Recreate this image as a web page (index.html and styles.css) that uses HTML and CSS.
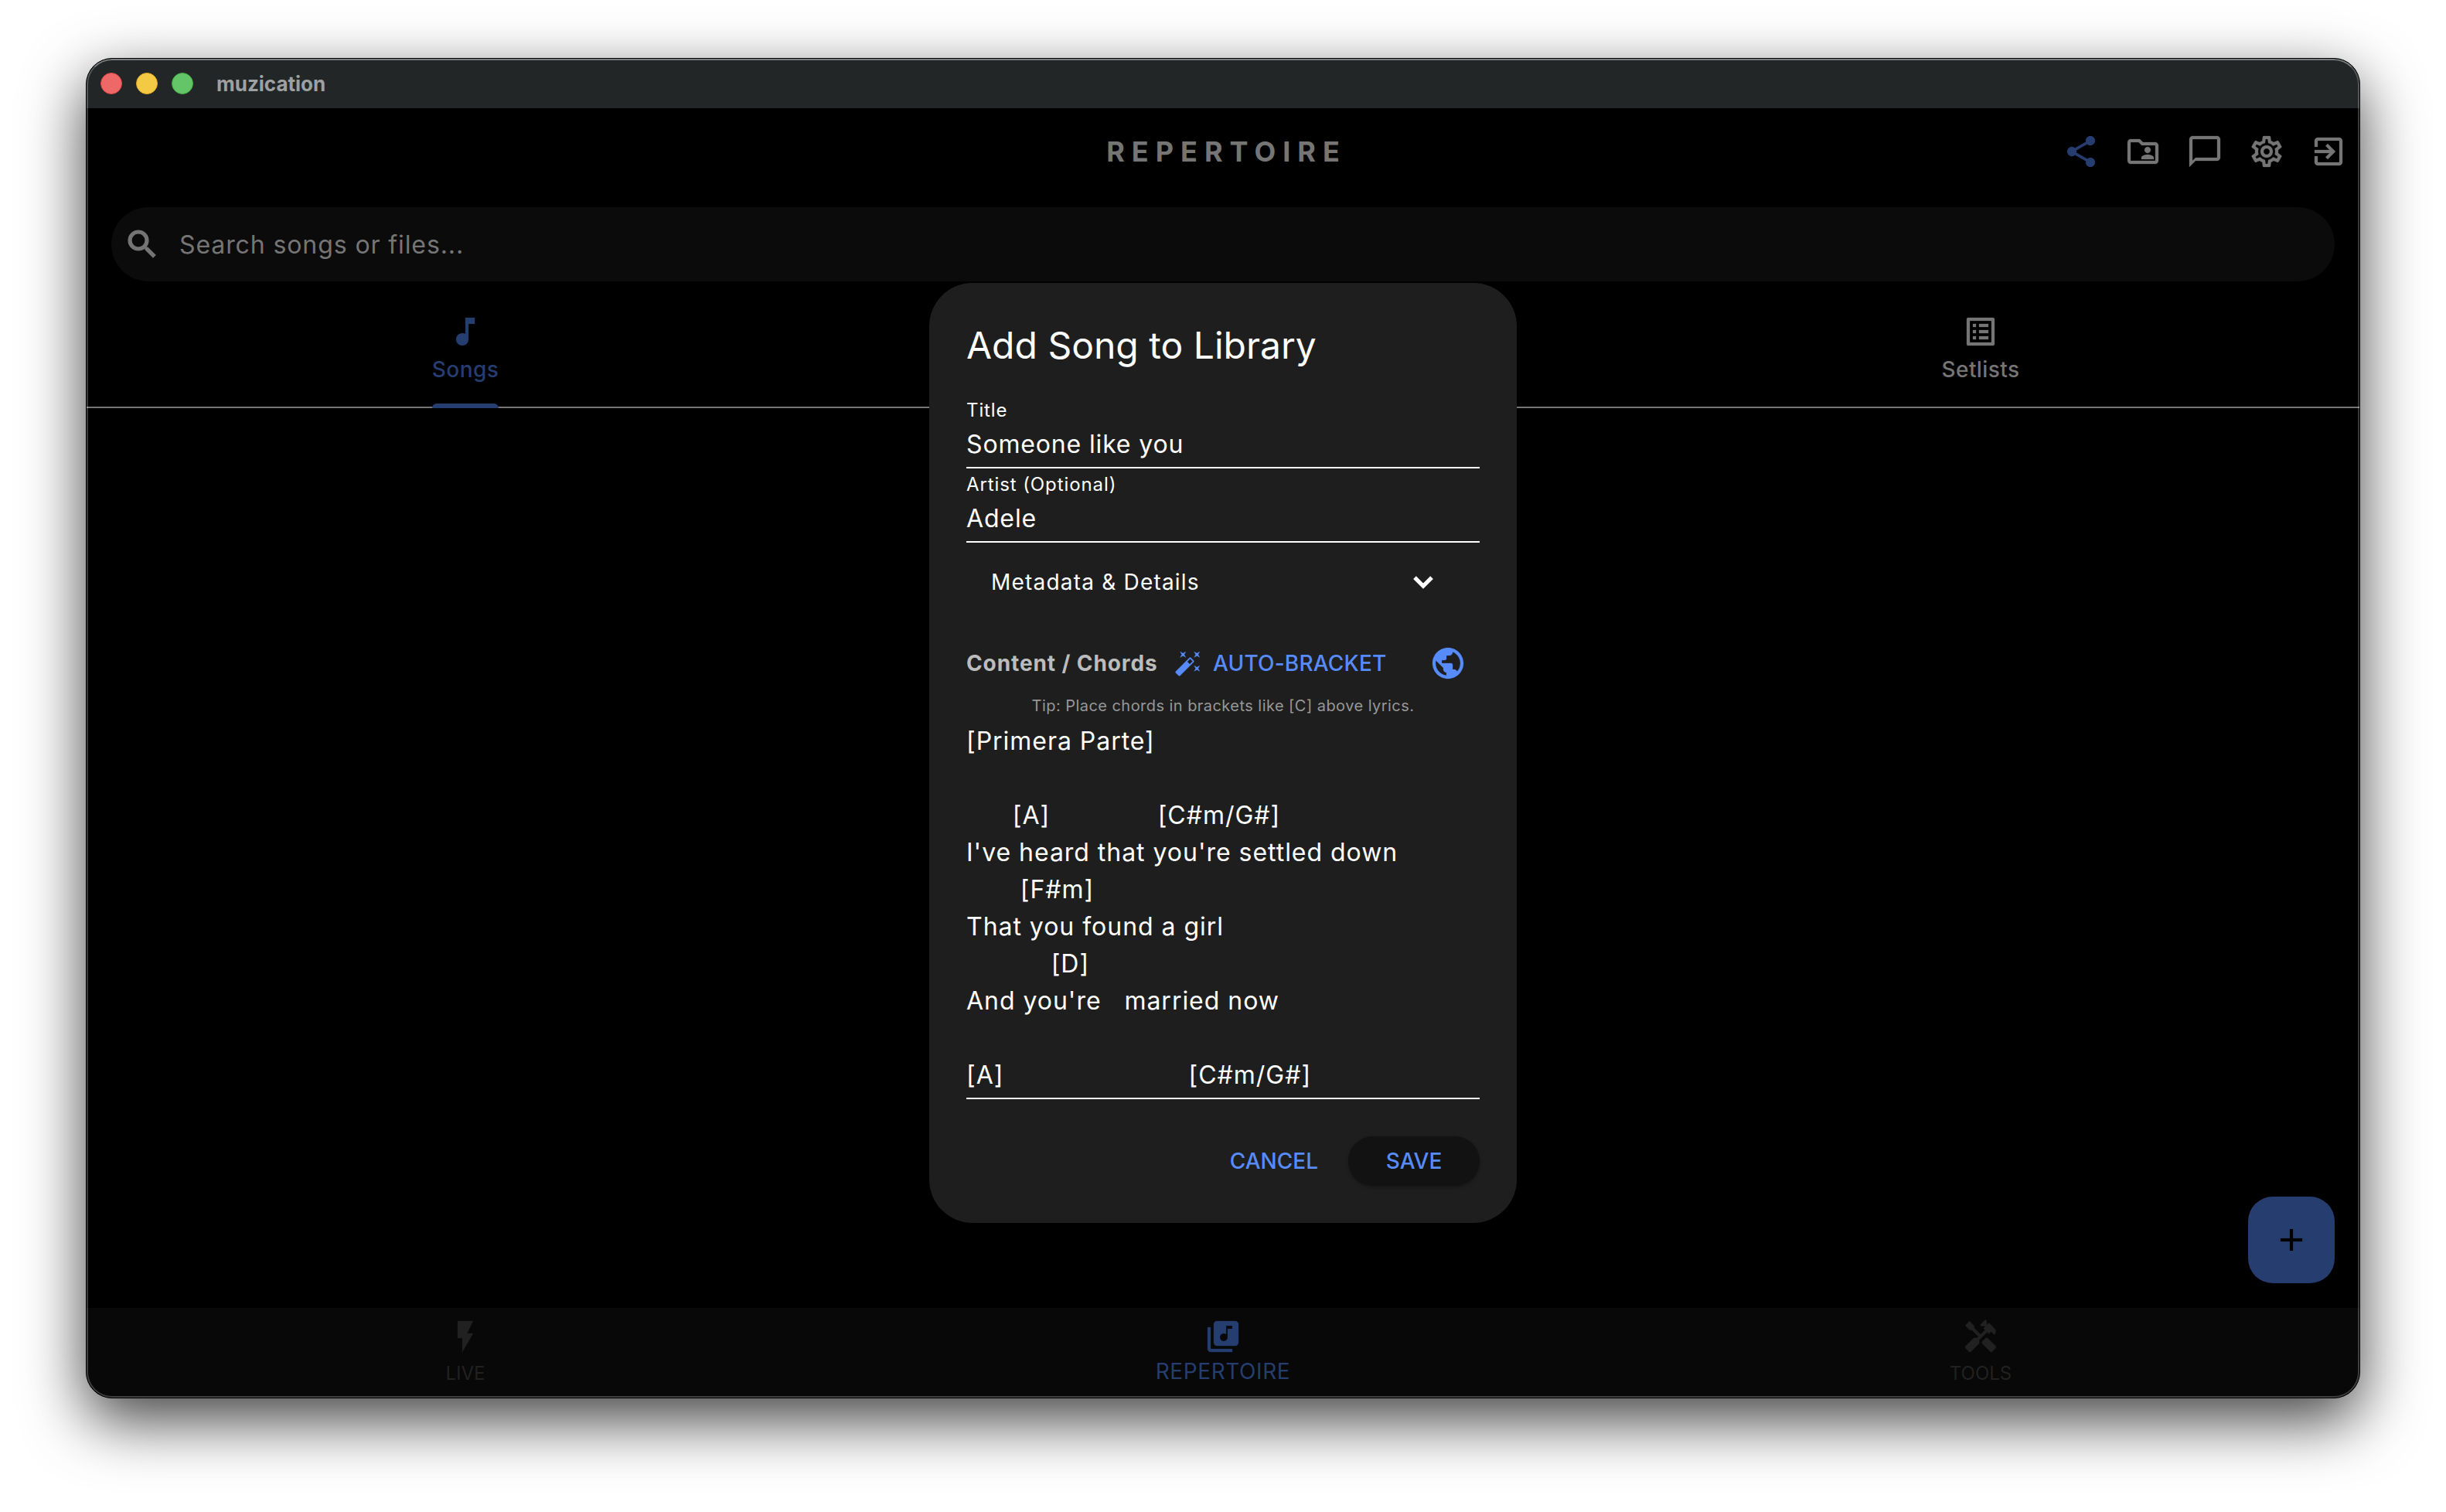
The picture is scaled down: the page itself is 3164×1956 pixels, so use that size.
FILE: index.html
```html
<!DOCTYPE html>
<html lang="en">
<head>
    <meta charset="UTF-8">
    <title>muzication</title>
    <link rel="stylesheet" href="styles.css">
</head>
<body>
    <div class="window">
        <div class="titlebar">
            <span class="dot red"></span>
            <span class="dot yellow"></span>
            <span class="dot green"></span>
            <span class="app-name">muzication</span>
        </div>

        <header class="appbar">
            <h1>REPERTOIRE</h1>
            <div class="actions">
                <svg class="icon active" viewBox="0 0 24 24"><path d="M18 16c-.76 0-1.44.3-1.96.77L8.91 12.7c.05-.23.09-.46.09-.7s-.04-.47-.09-.7l7.05-4.11c.54.5 1.25.81 2.04.81 1.66 0 3-1.34 3-3s-1.34-3-3-3-3 1.34-3 3c0 .24.04.47.09.7L8.04 9.81C7.5 9.31 6.79 9 6 9c-1.66 0-3 1.34-3 3s1.34 3 3 3c.79 0 1.5-.31 2.04-.81l7.05 4.12c-.05.22-.09.45-.09.69 0 1.66 1.34 3 3 3s3-1.34 3-3-1.34-3-3-3z"/></svg>
                <svg class="icon" viewBox="0 0 24 24"><path d="M20 6h-8l-2-2H4c-1.1 0-1.99.9-1.99 2L2 18c0 1.1.9 2 2 2h16c1.1 0 2-.9 2-2V8c0-1.1-.9-2-2-2zm0 12H4V6h5.17l2 2H20v10zm-5-5c1.1 0 2-.9 2-2s-.9-2-2-2-2 .9-2 2 .9 2 2 2zm-4 4h8v-1c0-1.33-2.67-2-4-2s-4 .67-4 2v1z"/></svg>
                <svg class="icon" viewBox="0 0 24 24"><path d="M20 2H4c-1.1 0-2 .9-2 2v18l4-4h14c1.1 0 2-.9 2-2V4c0-1.1-.9-2-2-2zm0 14H6l-2 2V4h16v12z"/></svg>
                <svg class="icon" viewBox="0 0 24 24"><path d="M19.43 12.98c.04-.32.07-.64.07-.98 0-.34-.03-.66-.07-.98l2.11-1.65c.19-.15.24-.42.12-.64l-2-3.46c-.09-.16-.26-.25-.44-.25-.06 0-.12.01-.17.03l-2.49 1c-.52-.4-1.08-.73-1.69-.98l-.38-2.65C14.46 2.18 14.25 2 14 2h-4c-.25 0-.46.18-.49.42l-.38 2.65c-.61.25-1.17.59-1.69.98l-2.49-1c-.06-.02-.12-.03-.18-.03-.17 0-.34.09-.43.25l-2 3.46c-.13.22-.07.49.12.64l2.11 1.65c-.04.32-.07.65-.07.98 0 .33.03.66.07.98l-2.11 1.65c-.19.15-.24.42-.12.64l2 3.46c.09.16.26.25.44.25.06 0 .12-.01.17-.03l2.49-1c.52.4 1.08.73 1.69.98l.38 2.65c.03.24.24.42.49.42h4c.25 0 .46-.18.49-.42l.38-2.65c.61-.25 1.17-.59 1.69-.98l2.49 1c.06.02.12.03.18.03.17 0 .34-.09.43-.25l2-3.46c.12-.22.07-.49-.12-.64l-2.11-1.65zm-1.98-1.71c.04.31.05.52.05.73 0 .21-.02.43-.05.73l-.14 1.13.89.7 1.08.84-.7 1.21-1.27-.51-1.04-.42-.9.68c-.43.32-.84.56-1.25.73l-1.06.43-.16 1.13-.2 1.35h-1.4l-.19-1.35-.16-1.13-1.06-.43c-.43-.18-.83-.41-1.23-.71l-.91-.7-1.06.43-1.27.51-.7-1.21 1.08-.84.89-.7-.14-1.13c-.03-.31-.05-.54-.05-.74s.02-.43.05-.73l.14-1.13-.89-.7-1.08-.84.7-1.21 1.27.51 1.04.42.9-.68c.43-.32.84-.56 1.25-.73l1.06-.43.16-1.13.2-1.35h1.39l.19 1.35.16 1.13 1.06.43c.43.18.83.41 1.23.71l.91.7 1.06-.43 1.27-.51.7 1.21-1.07.85-.89.7.14 1.13zM12 8c-2.21 0-4 1.79-4 4s1.79 4 4 4 4-1.79 4-4-1.79-4-4-4zm0 6c-1.1 0-2-.9-2-2s.9-2 2-2 2 .9 2 2-.9 2-2 2z"/></svg>
                <svg class="icon" viewBox="0 0 24 24"><path d="M10.09 15.59L11.5 17l5-5-5-5-1.41 1.41L12.67 11H3v2h9.67l-2.58 2.59zM19 3H5c-1.11 0-2 .9-2 2v4h2V5h14v14H5v-4H3v4c0 1.1.89 2 2 2h14c1.1 0 2-.9 2-2V5c0-1.1-.9-2-2-2z"/></svg>
            </div>
        </header>

        <div class="search">
            <svg class="icon bold" viewBox="0 0 24 24"><path d="M15.5 14h-.79l-.28-.27C15.41 12.59 16 11.11 16 9.5 16 5.91 13.09 3 9.5 3S3 5.91 3 9.5 5.91 16 9.5 16c1.61 0 3.09-.59 4.23-1.57l.27.28v.79l5 4.99L20.49 19l-4.99-5zm-6 0C7.01 14 5 11.99 5 9.5S7.01 5 9.5 5 14 7.01 14 9.5 11.99 14 9.5 14z"/></svg>
            <span>Search songs or files...</span>
        </div>

        <nav class="tabs">
            <div class="tab active">
                <svg class="icon" viewBox="0 0 24 24"><path d="M12 3v10.55c-.59-.34-1.27-.55-2-.55-2.21 0-4 1.79-4 4s1.79 4 4 4 4-1.79 4-4V7h4V3h-6z"/></svg>
                <span>Songs</span>
            </div>
            <div class="tab"></div>
            <div class="tab">
                <svg class="icon" viewBox="0 0 24 24"><path d="M19 5v14H5V5h14m1.1-2H3.9c-.5 0-.9.4-.9.9v16.2c0 .4.4.9.9.9h16.2c.4 0 .9-.5.9-.9V3.9c0-.5-.5-.9-.9-.9zM11 7h6v2h-6V7zm0 4h6v2h-6v-2zm0 4h6v2h-6zM7 7h2v2H7zm0 4h2v2H7zm0 4h2v2H7z"/></svg>
                <span>Setlists</span>
            </div>
        </nav>

        <main class="content">
            <button class="fab">
                <svg class="icon" viewBox="0 0 24 24"><path d="M19 13h-6v6h-2v-6H5v-2h6V5h2v6h6v2z"/></svg>
            </button>
        </main>

        <nav class="bottom-nav">
            <div class="nav-item">
                <svg class="icon" viewBox="0 0 24 24"><path d="M7 2v11h3v9l7-12h-4l4-8z"/></svg>
                <span>LIVE</span>
            </div>
            <div class="nav-item active">
                <svg class="icon" viewBox="0 0 24 24"><path d="M20 2H8c-1.1 0-2 .9-2 2v12c0 1.1.9 2 2 2h12c1.1 0 2-.9 2-2V4c0-1.1-.9-2-2-2zm-2 5h-3v5.5c0 1.38-1.12 2.5-2.5 2.5S10 13.88 10 12.5s1.12-2.5 2.5-2.5c.57 0 1.08.19 1.5.51V5h4v2zM4 6H2v14c0 1.1.9 2 2 2h14v-2H4V6z"/></svg>
                <span>REPERTOIRE</span>
            </div>
            <div class="nav-item">
                <svg class="icon" viewBox="0 0 24 24"><path d="M21.67 18.17l-5.3-5.3h-.99l-2.54 2.54v.99l5.3 5.3c.39.39 1.02.39 1.41 0l2.12-2.12c.39-.38.39-1.02 0-1.41z"/><path d="M17.34 10.19l1.41-1.41 2.12 2.12c1.17-1.17 1.17-3.07 0-4.24l-3.54-3.54-1.41 1.41V1.71L15.22 1l-3.54 3.54.71.71h2.83l-1.41 1.41 1.06 1.06-2.89 2.89-4.13-4.13V5.06L4.83 2.04 2 4.87 5.03 7.9h1.41l4.13 4.13-.85.85H7.6l-5.3 5.3c-.39.39-.39 1.02 0 1.41l2.12 2.12c.39.39 1.02.39 1.41 0l5.3-5.3v-2.12l5.15-5.15 1.06 1.05z"/></svg>
                <span>TOOLS</span>
            </div>
        </nav>

        <div class="overlay">
            <div class="dialog">
                <h2>Add Song to Library</h2>
                <div class="field">
                    <label>Title</label>
                    <div class="value">Someone like you</div>
                </div>
                <div class="field">
                    <label>Artist (Optional)</label>
                    <div class="value">Adele</div>
                </div>
                <div class="expander">
                    <span>Metadata &amp; Details</span>
                    <svg class="icon bold" viewBox="0 0 24 24"><path d="M16.59 8.59L12 13.17 7.41 8.59 6 10l6 6 6-6z"/></svg>
                </div>
                <div class="toolbar">
                    <span class="toolbar-title">Content / Chords</span>
                    <svg class="icon small" viewBox="0 0 24 24"><path d="M7.5 5.6L10 7 8.6 4.5 10 2 7.5 3.4 5 2l1.4 2.5L5 7zm12 9.8L17 14l1.4 2.5L17 19l2.5-1.4L22 19l-1.4-2.5L22 14zM22 2l-2.5 1.4L17 2l1.4 2.5L17 7l2.5-1.4L22 7l-1.4-2.5zm-7.63 5.29c-.39-.39-1.02-.39-1.41 0L1.29 18.96c-.39.39-.39 1.02 0 1.41l2.34 2.34c.39.39 1.02.39 1.41 0L16.7 11.05c.39-.39.39-1.02 0-1.41l-2.33-2.35zm-1.03 5.49l-2.12-2.12 2.44-2.44 2.12 2.12-2.44 2.44z"/></svg>
                    <span class="link">AUTO-BRACKET</span>
                    <svg class="icon globe" viewBox="0 0 24 24"><path d="M12 2C6.48 2 2 6.48 2 12s4.48 10 10 10 10-4.48 10-10S17.52 2 12 2zm-1 17.93c-3.95-.49-7-3.85-7-7.93 0-.62.08-1.21.21-1.79L9 15v1c0 1.1.9 2 2 2v1.93zm6.9-2.54c-.26-.81-1-1.39-1.9-1.39h-1v-3c0-.55-.45-1-1-1H8v-2h2c.55 0 1-.45 1-1V7h2c1.1 0 2-.9 2-2v-.41c2.93 1.19 5 4.06 5 7.41 0 2.08-.8 3.97-2.1 5.39z"/></svg>
                </div>
                <p class="tip">Tip: Place chords in brackets like [C] above lyrics.</p>
                <div class="lyrics">[Primera Parte]

      [A]              [C#m/G#]
I've heard that you're settled down
       [F#m]
That you found a girl
           [D]
And you're   married now

[A]                        [C#m/G#]</div>
                <div class="buttons">
                    <span class="cancel">CANCEL</span>
                    <button class="save">SAVE</button>
                </div>
            </div>
        </div>
    </div>
</body>
</html>
```
FILE: styles.css
```css
* {
    box-sizing: border-box;
}
body {
    margin: 0;
    padding: 75px 111px;
    height: 1956px;
    background-color: #fff;
    font-family: Inter, "Liberation Sans", sans-serif;
    overflow: hidden;
}
h1, h2, p {
    margin: 0;
}
.window {
    position: relative;
    display: flex;
    flex-direction: column;
    height: 1734px;
    border: 1px solid #000;
    border-radius: 34px;
    background-color: #000;
    overflow: hidden;
    box-shadow: 0 28px 80px rgba(0, 0, 0, 0.75);
}
/* light rim along the window edge */
.window:after {
    position: absolute;
    content: "";
    inset: 0;
    border: 2px solid rgba(255, 255, 255, 0.22);
    border-top-color: rgba(255, 255, 255, 0.4);
    border-radius: 33px;
    z-index: 3;
}
.icon {
    display: block;
    width: 48px;
    height: 48px;
    fill: currentColor;
    stroke: currentColor;
    stroke-width: 0.12;
    flex-shrink: 0;
}
.icon.bold {
    stroke-width: 0.6;
}
.titlebar {
    display: flex;
    align-items: center;
    height: 64px;
    padding-left: 18px;
    background-color: #232627;
}
.dot {
    width: 28px;
    height: 28px;
    margin-right: 18px;
    border-radius: 50%;
}
.red {
    background-color: #ef6868;
    border: 1px solid #dc4744;
}
.yellow {
    background-color: #f4c943;
    border: 1px solid #dca92a;
}
.green {
    background-color: #64c568;
    border: 1px solid #3faa43;
}
.app-name {
    margin-left: 12px;
    color: #9da1a2;
    font-size: 26px;
    font-weight: 700;
}
.appbar {
    display: grid;
    grid-template-columns: 1fr auto 1fr;
    align-items: center;
    height: 112px;
    color: #757575;
}
.appbar h1 {
    grid-column: 2;
    margin-right: -9px;
    font-size: 36px;
    font-weight: 700;
    letter-spacing: 9px;
}
.actions {
    display: flex;
    justify-content: flex-end;
    gap: 32px;
    padding-right: 16px;
}
.actions .active {
    color: #263d6f;
}
.search {
    display: flex;
    align-items: center;
    height: 96px;
    margin: 16px 32px;
    padding-left: 16px;
    border-radius: 48px;
    background-color: #0b0b0b;
    color: #757575;
    font-size: 32px;
    letter-spacing: 0.9px;
}
.search span {
    margin-left: 24px;
}
.tabs {
    display: flex;
    height: 148px;
    border-bottom: 2px solid #757575;
}
.tab {
    position: relative;
    display: flex;
    flex: 1;
    flex-direction: column;
    align-items: center;
    padding-top: 25px;
    color: #757575;
    font-size: 28px;
    font-weight: 500;
    line-height: 40px;
    letter-spacing: 0.4px;
}
.tab span {
    margin-top: 5px;
}
.tab.active {
    color: #263d6f;
}
.tab.active:after {
    position: absolute;
    content: "";
    bottom: -2px;
    width: 86px;
    height: 6px;
    border-radius: 6px 6px 0 0;
    background-color: #263d6f;
}
.content {
    display: flex;
    flex: 1;
    justify-content: flex-end;
    align-items: flex-end;
    padding: 32px;
}
.fab {
    display: flex;
    justify-content: center;
    align-items: center;
    width: 112px;
    height: 112px;
    padding: 0;
    border: none;
    border-radius: 32px;
    background-color: #263d6f;
    color: #000;
}
.bottom-nav {
    display: flex;
    height: 116px;
    background-color: #080808;
}
.nav-item {
    display: flex;
    flex: 1;
    flex-direction: column;
    align-items: center;
    padding-top: 13px;
    color: #212121;
    font-size: 24px;
    line-height: 34px;
}
.nav-item span {
    margin-top: 7px;
}
.nav-item.active {
    color: #263d6f;
    font-size: 28px;
    letter-spacing: 0.6px;
}
.nav-item.active span {
    margin-top: 4px;
}
.overlay {
    position: absolute;
    inset: 290px 0 0;
    display: flex;
    justify-content: center;
    align-items: flex-start;
    z-index: 2;
}
.dialog {
    width: 760px;
    height: 1216px;
    padding: 48px;
    border-radius: 56px;
    background-color: #1e1e1e;
    color: #fff;
}
.dialog h2 {
    padding-top: 1px;
    margin-bottom: 31px;
    font-size: 48px;
    font-weight: 400;
    line-height: 64px;
}
.field {
    padding: 5px 0;
    border-bottom: 2px solid #fff;
}
.field label {
    display: block;
    font-size: 24px;
    line-height: 32px;
    letter-spacing: 0.9px;
}
.value {
    margin-top: 4px;
    font-size: 32px;
    line-height: 48px;
    letter-spacing: 0.85px;
}
.expander {
    display: flex;
    justify-content: space-between;
    align-items: center;
    height: 102px;
    padding: 0 49px 0 32px;
    font-size: 28px;
    letter-spacing: 1.2px;
}
.toolbar {
    display: flex;
    align-items: center;
    height: 80px;
    margin-top: 14px;
    color: #578bfa;
    font-size: 28px;
}
.toolbar-title {
    width: 269px;
    color: #bcbcbc;
    font-weight: 700;
    letter-spacing: 0.9px;
}
.small {
    width: 36px;
    height: 36px;
}
.link {
    margin-left: 14px;
    font-weight: 500;
    letter-spacing: 0.2px;
}
.globe {
    margin-left: auto;
    margin-right: 17px;
}
.tip {
    margin-top: 2px;
    color: #979797;
    font-size: 20px;
    line-height: 26px;
    letter-spacing: 0.45px;
    text-align: center;
}
.lyrics {
    margin-top: 9px;
    padding-bottom: 5px;
    border-bottom: 2px solid #fff;
    font-size: 32px;
    line-height: 48px;
    letter-spacing: 0.97px;
    white-space: pre;
}
.buttons {
    display: flex;
    justify-content: flex-end;
    align-items: center;
    margin-top: 48px;
    color: #578bfa;
    font-size: 28px;
    font-weight: 500;
}
.cancel {
    margin-right: 39px;
}
.save {
    width: 170px;
    height: 64px;
    padding: 0;
    border: none;
    border-radius: 32px;
    background-color: #121212;
    color: inherit;
    font: inherit;
    box-shadow: 0 2px 4px rgba(0, 0, 0, 0.3);
}
```
